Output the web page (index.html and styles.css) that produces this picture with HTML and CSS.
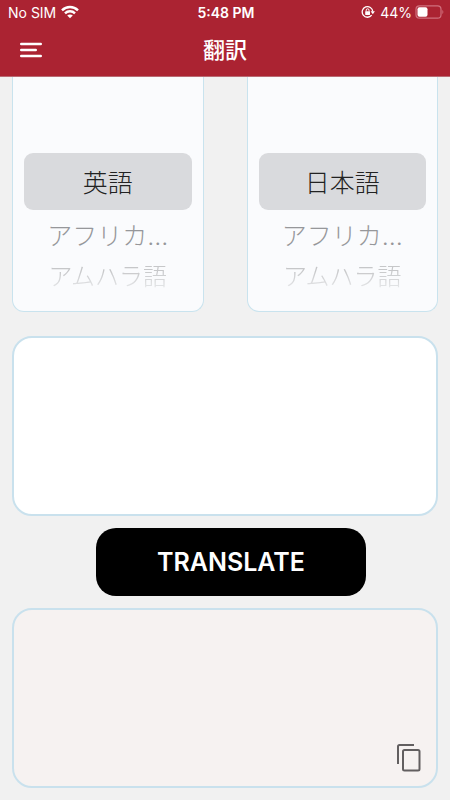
FILE: index.html
```html
<!DOCTYPE html>
<html lang="ja">
<head>
<meta charset="utf-8">
<meta name="viewport" content="width=device-width, initial-scale=1">
<title>翻訳</title>
<link rel="stylesheet" href="styles.css">
</head>
<body>
<header class="top">
  <div class="status">
    <div class="status-left">
      <span>No SIM</span>
      <svg width="18" height="14" viewBox="0 0 18 14" fill="none" stroke="#fff" stroke-width="2.4" aria-hidden="true">
        <path d="M1 5.3C5.5.8 12.5.8 17 5.3M4 8.4c2.800-2.800 7.200-2.800 10 0"/>
        <path d="M9 13.300 6.200 10.500c1.600-1.500 4-1.500 5.600 0z" fill="#fff" stroke="none"/>
      </svg>
    </div>
    <time class="clock">5:48 PM</time>
    <div class="status-right">
      <svg width="14" height="14" viewBox="0 0 14 14" fill="none" stroke="#fff" stroke-width="1.300" aria-hidden="true">
        <path d="M10.700 10.200A5.300 5.300 0 1 1 11.800 6.500"/>
        <path d="M9.600 6.300h4.300L11.800 9.200z" fill="#fff" stroke="none"/>
        <rect x="4.200" y="6.200" width="4.800" height="3.800" rx=".4" fill="#fff" stroke="none"/>
        <path d="M5.200 6.400V5.200a1.400 1.400 0 0 1 2.800 0v1.200" stroke-width="1"/>
      </svg>
      <span class="charge">44%</span>
      <svg width="29" height="14" viewBox="0 0 29 14" fill="none" aria-hidden="true">
        <rect x="1" y=".8" width="25" height="12.400" rx="3.500" stroke="#d0707d" stroke-width="1.200"/>
        <rect x="2.500" y="2.300" width="10" height="9.400" rx="2" fill="#fff"/>
        <path d="M27.400 5c1.200.6 1.200 3.400 0 4z" fill="#d0707d"/>
      </svg>
    </div>
  </div>
  <div class="nav">
    <button class="menu" type="button" aria-label="メニュー">
      <svg width="22" height="16" viewBox="0 0 22 16" fill="none" stroke="#fff" stroke-width="2.400" stroke-linecap="round" aria-hidden="true">
        <path d="M1.200 2h19.600M1.200 8h14.600M1.200 14h19.600"/>
      </svg>
    </button>
    <h1 class="title">翻訳</h1>
  </div>
</header>
<main class="page">
  <div class="pickers">
    <ul class="picker" role="listbox" aria-label="翻訳元の言語">
      <li class="item selected" role="option" aria-selected="true">英語</li>
      <li class="item near" role="option" aria-selected="false">アフリカ...</li>
      <li class="item far" role="option" aria-selected="false">アムハラ語</li>
    </ul>
    <ul class="picker" role="listbox" aria-label="翻訳先の言語">
      <li class="item selected" role="option" aria-selected="true">日本語</li>
      <li class="item near" role="option" aria-selected="false">アフリカ...</li>
      <li class="item far" role="option" aria-selected="false">アムハラ語</li>
    </ul>
  </div>
  <textarea class="box source" aria-label="翻訳するテキスト"></textarea>
  <button class="translate" type="button">TRANSLATE</button>
  <section class="box result" aria-label="翻訳結果">
    <button class="copy" type="button" aria-label="コピー">
      <svg width="24" height="28" viewBox="0 0 24 28" fill="none" stroke="#625f60" stroke-width="2" aria-hidden="true">
        <path d="M1 20V2.500Q1 1 2.500 1H17"/>
        <rect x="6" y="6" width="16.500" height="20.500" rx="1.500"/>
      </svg>
    </button>
  </section>
</main>
</body>
</html>
```
FILE: styles.css
```css
* {
  box-sizing: border-box;
}

body {
  margin: 0;
  min-height: 100vh;
  display: flex;
  flex-direction: column;
  background: #f1f1f1;
  font-family: Inter, "Noto Sans CJK JP", sans-serif;
}

button {
  border: 0;
  padding: 0;
  background: none;
  font: inherit;
  cursor: pointer;
}

svg {
  display: block;
}

.top {
  background: #ab2332;
  color: #fff;
  border-bottom: 1px solid #b96a73;
}

.status {
  display: grid;
  grid-template-columns: 1fr auto 1fr;
  align-items: center;
  height: 24px;
  padding: 0 6px 0 8px;
  font-size: 14px;
}

.status-left {
  display: flex;
  align-items: center;
  gap: 5px;
}

.status-right {
  display: flex;
  align-items: center;
  justify-content: flex-end;
  gap: 3px;
}

.charge {
  padding-left: 2px;
}

.clock {
  font-weight: 600;
}

.nav {
  display: grid;
  grid-template-columns: 1fr auto 1fr;
  align-items: center;
  height: 52px;
  padding: 0 20px;
}

.menu {
  justify-self: start;
}

.title {
  margin: 0;
  font-size: 22px;
  line-height: 32px;
  font-weight: 500;
}

.page {
  flex: 1;
  display: flex;
  flex-direction: column;
  padding: 0 12px 12px;
}

.pickers {
  display: grid;
  grid-template-columns: 1fr 1fr;
  gap: 43px;
}

.picker {
  list-style: none;
  margin: 0;
  padding: 76px 11px 20px;
  background: #fafbfd;
  border: 1px solid #c9e3ee;
  border-top: 0;
  border-radius: 0 0 12px 12px;
  text-align: center;
  font-weight: 300;
}

.item {
  white-space: nowrap;
}

.selected {
  padding-top: 4px;
  border-radius: 9px;
  background: #d9dadd;
  color: #222;
  font-size: 25px;
  line-height: 53px;
}

.near {
  color: #96979a;
  font-size: 25px;
  line-height: 52px;
}

.far {
  color: #c6c7c9;
  font-size: 24px;
  line-height: 29px;
  -webkit-mask-image: linear-gradient(#000 30%, rgba(0, 0, 0, 0.3));
  mask-image: linear-gradient(#000 30%, rgba(0, 0, 0, 0.3));
}

.box {
  display: flex;
  width: 100%;
  min-height: 180px;
  border: 2px solid #c9e1ed;
  border-radius: 20px;
}

.source {
  margin-top: 24px;
  padding: 16px;
  background: #fff;
  font: inherit;
  resize: none;
  outline: 0;
}

.translate {
  align-self: center;
  width: 60%;
  min-width: 270px;
  height: 68px;
  margin: 12px 0 12px 12px;
  border-radius: 20px;
  background: #000;
  color: #fff;
  font-size: 25px;
  font-weight: 600;
}

.result {
  flex: 1;
  align-items: flex-end;
  justify-content: flex-end;
  padding: 14px 15px;
  background: #f6f2f1;
}
```
